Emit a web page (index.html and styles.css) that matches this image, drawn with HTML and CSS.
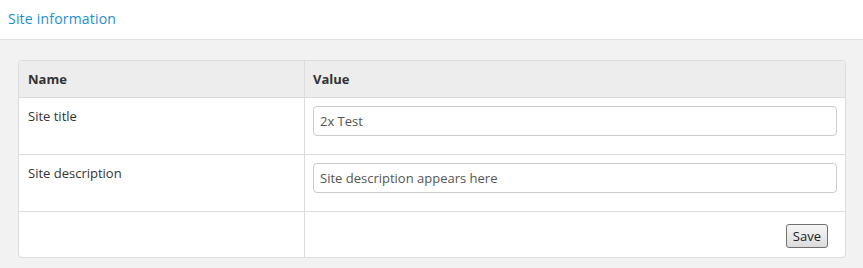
FILE: index.html
```html
<!DOCTYPE html>
<html lang="en">
<head>
    <meta charset="UTF-8">
    <title>Site information</title>
    <link rel="stylesheet" href="styles.css">
</head>
<body>
    <div class="page-header">
        <a href="#" class="page-title">Site information</a>
    </div>

    <div class="content">
        <table class="settings">
            <thead>
                <tr>
                    <th class="col-name">Name</th>
                    <th>Value</th>
                </tr>
            </thead>
            <tbody>
                <tr>
                    <td>Site title</td>
                    <td><input type="text" class="field" value="2x Test"></td>
                </tr>
                <tr>
                    <td>Site description</td>
                    <td><input type="text" class="field" value="Site description appears here"></td>
                </tr>
                <tr class="actions">
                    <td></td>
                    <td><button class="save">Save</button></td>
                </tr>
            </tbody>
        </table>
    </div>
</body>
</html>
```

FILE: styles.css
```css
body {
    margin: 0;
    font-family: "Open Sans", Arial, sans-serif;
    font-size: 13px;
    line-height: 20px;
    color: #333;
    background: #f2f2f2;
    height: 268px;
    overflow: hidden;
}
.page-header {
    background: #fff;
    height: 40px;
    border-bottom: 1px solid #e0e0e0;
    padding-left: 8px;
    box-sizing: border-box;
    display: flex;
    align-items: center;
}
.page-title {
    color: #1b8fd2;
    font-size: 14px;
    letter-spacing: 0.2px;
    text-decoration: none;
    margin-top: -1px;
}
.content {
    padding: 20px 17px 0 18px;
}
.settings {
    width: 100%;
    border-collapse: separate;
    border-spacing: 0;
    background: #fff;
    border: 1px solid #dcdcdc;
    border-radius: 4px;
}
.settings th,
.settings td {
    text-align: left;
    vertical-align: top;
    padding: 8px 8px 8px 9px;
    border-top: 1px solid #dcdcdc;
}
.settings th + th,
.settings td + td {
    border-left: 1px solid #dcdcdc;
    padding-left: 8px;
}
.settings thead th {
    border-top: none;
    background: #ededed;
    font-weight: bold;
}
.settings thead th:first-child {
    border-top-left-radius: 4px;
}
.settings thead th:last-child {
    border-top-right-radius: 4px;
}
.col-name {
    width: 268px;
}
.field {
    display: block;
    box-sizing: border-box;
    width: 100%;
    height: 30px;
    margin: 0 0 10px;
    padding: 4px 6px;
    font-family: "Open Sans", Arial, sans-serif;
    font-size: 13px;
    color: #555;
    background: #fff;
    border: 1px solid #ccc;
    border-radius: 4px;
}
.actions td {
    padding-top: 12px;
    padding-bottom: 9px;
}
.actions td + td {
    text-align: right;
    padding-right: 17px;
}
.save {
    display: inline-block;
    height: 24px;
    padding: 0 6px;
    font-family: "Open Sans", Arial, sans-serif;
    font-size: 13px;
    color: #222;
    background: linear-gradient(#f6f6f6, #dcdcdc);
    border: 1px solid #707070;
    border-radius: 3px;
    vertical-align: top;
}
```
